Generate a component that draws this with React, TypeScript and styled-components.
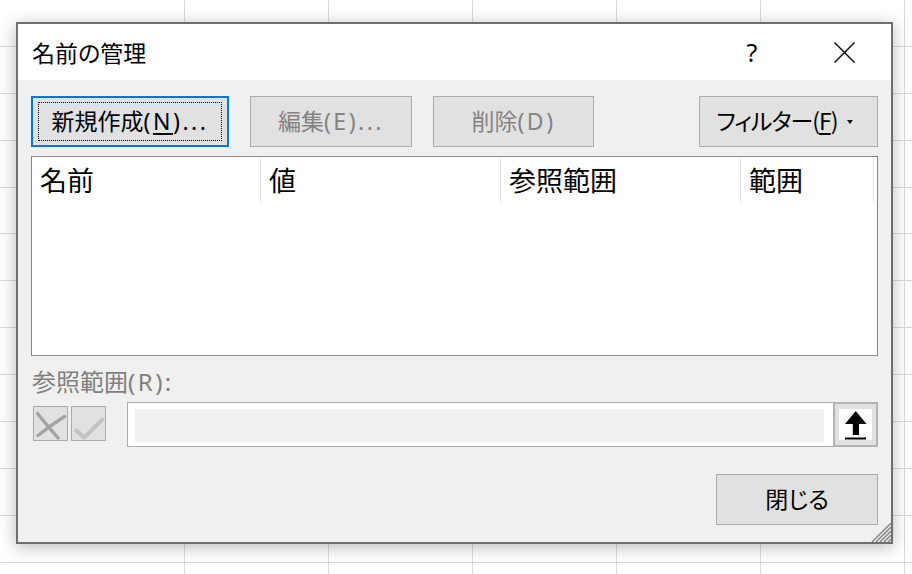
import React from "react";
import styled, { createGlobalStyle } from "styled-components";

const GlobalStyle = createGlobalStyle`
  html, body {
    margin: 0;
    padding: 0;
    overflow: hidden;
  }
  body {
    font-family: "Noto Sans CJK JP", "Noto Sans", sans-serif;
    font-feature-settings: "palt";
    color: #000;
  }
`;

const Page = styled.div`
  width: 912px;
  height: 574px;
  box-sizing: border-box;
  padding: 22px 0 0 16px;
  background-color: #fff;
  background-image:
    repeating-linear-gradient(to right, transparent 0 143px, #dadada 143px 144px),
    repeating-linear-gradient(to bottom, transparent 0 45.9px, #dadada 45.9px 46.9px);
  background-position: 41px 0, 0 0;
`;

const Dialog = styled.div`
  position: relative;
  width: 877px;
  height: 522px;
  box-sizing: border-box;
  border: 2px solid #6f6f6f;
  background: #f0f0f0;
  display: flex;
  flex-direction: column;
  box-shadow: 0 3px 16px rgba(0, 0, 0, 0.28);
`;

const TitleBar = styled.div`
  height: 56px;
  background: #fff;
  display: flex;
  align-items: center;
  padding: 0 24px 0 14px;
`;

const Title = styled.div`
  flex: 1;
  font-size: 23px;
  line-height: 1;
  padding-top: 1px;
`;

const CaptionButton = styled.div<{ $gap?: number }>`
  width: 46px;
  height: 40px;
  display: flex;
  align-items: center;
  justify-content: center;
  margin-left: ${(p) => p.$gap ?? 0}px;
  font-family: "Noto Sans", sans-serif;
  font-size: 25px;
  font-weight: 400;
  line-height: 1;
`;

const Body = styled.div`
  flex: 1;
  display: flex;
  flex-direction: column;
  padding: 16px 13px 17px 13px;
`;

const ButtonRow = styled.div`
  display: flex;
  height: 51px;
  gap: 21px;
`;

const Spacer = styled.div`
  flex: 1;
`;

const PushButton = styled.button<{
  $w: number;
  $focused?: boolean;
  $disabled?: boolean;
  $ls?: number;
  $pr?: number;
}>`
  position: relative;
  width: ${(p) => p.$w}px;
  height: 51px;
  box-sizing: border-box;
  background: #e1e1e1;
  border: ${(p) => (p.$focused ? "2px solid #0078d7" : "1px solid #adadad")};
  color: ${(p) => (p.$disabled ? "#838383" : "#000")};
  font-family: "Noto Sans CJK JP", "Noto Sans", sans-serif;
  font-feature-settings: "palt";
  font-size: 23px;
  letter-spacing: ${(p) => p.$ls ?? 0}px;
  line-height: 1;
  padding: 0 ${(p) => p.$pr ?? 0}px 2px 0;
  margin: 0;
  display: flex;
  align-items: center;
  justify-content: center;
  gap: 9px;
  &::after {
    content: "";
    display: ${(p) => (p.$focused ? "block" : "none")};
    position: absolute;
    inset: 4px 5px 4px 5px;
    border: 1px dotted #000;
  }
`;

const Latin = styled.span`
  font-family: "Noto Sans", sans-serif;
  letter-spacing: 2.5px;
`;

const Mnemonic = styled.span`
  text-decoration: underline;
  text-underline-offset: 3px;
  text-decoration-thickness: 1.5px;
`;

const DropCaret = styled.span`
  width: 0;
  height: 0;
  border-left: 3.5px solid transparent;
  border-right: 3.5px solid transparent;
  border-top: 4px solid #000;
  margin-top: 2px;
`;

const ListBox = styled.div`
  margin-top: 9px;
  height: 200px;
  box-sizing: border-box;
  border: 1px solid #828790;
  background: #fff;
  display: flex;
  flex-direction: column;
`;

const HeaderRow = styled.div`
  display: flex;
  height: 47px;
`;

const HeaderCell = styled.div<{ $w: number }>`
  width: ${(p) => p.$w}px;
  box-sizing: border-box;
  padding: 0 0 2px 8px;
  display: flex;
  align-items: center;
  font-size: 27px;
  line-height: 1;
  border-right: 1px solid #e5e5e5;
  margin: 1px 0 1px;
`;

const FieldLabel = styled.div`
  margin-top: 13px;
  height: 24px;
  line-height: 24px;
  font-size: 24px;
  color: #7f7f7f;
  padding-left: 1px;
`;

const RefRow = styled.div`
  margin-top: 9px;
  height: 45px;
  display: flex;
`;

const IconButton = styled.div<{ $ml: number }>`
  width: 35px;
  height: 35px;
  box-sizing: border-box;
  margin: 4px 0 0 ${(p) => p.$ml}px;
  border: 1px solid #ababab;
  background: #e1e1e1;
  display: flex;
`;

const InputArea = styled.div`
  flex: 1;
  margin-left: 21px;
  box-sizing: border-box;
  border: 1px solid #adadad;
  border-right: none;
  background: #fff;
  padding: 6px 9px 4px 7px;
  display: flex;
`;

const Field = styled.div`
  flex: 1;
  background: #f0f0f0;
`;

const RefButton = styled.div`
  width: 45px;
  box-sizing: border-box;
  border: 2px solid #b4b4b4;
  background: #e1e1e1;
  display: flex;
  align-items: center;
  justify-content: center;
`;

const RefIconBox = styled.div`
  width: 33px;
  height: 31px;
  background: #fff;
  display: flex;
  justify-content: center;
  padding-top: 2px;
  box-sizing: border-box;
`;

const FooterRow = styled.div`
  margin-top: 27px;
  display: flex;
  justify-content: flex-end;
`;

const Grip = styled.svg`
  position: absolute;
  right: 0;
  bottom: 0;
`;

export default function App() {
  return (
    <>
      <GlobalStyle />
      <Page>
        <Dialog>
          <TitleBar>
            <Title>名前の管理</Title>
            <CaptionButton>?</CaptionButton>
            <CaptionButton $gap={46}>
              <svg width="21" height="21" viewBox="0 0 21 21">
                <path d="M0.5 0.5 L20.5 20.5 M20.5 0.5 L0.5 20.5" stroke="#000" strokeWidth="1.4" />
              </svg>
            </CaptionButton>
          </TitleBar>
          <Body>
            <ButtonRow>
              <PushButton $w={198} $focused>
                <span>
                  新規作成
                  <Latin>
                    (<Mnemonic>N</Mnemonic>)...
                  </Latin>
                </span>
              </PushButton>
              <PushButton $w={162} $disabled>
                <span>
                  編集<Latin>(E)...</Latin>
                </span>
              </PushButton>
              <PushButton $w={161} $disabled>
                <span>
                  削除<Latin>(D)</Latin>
                </span>
              </PushButton>
              <Spacer />
              <PushButton $w={179} $ls={-1} $pr={8}>
                <span>
                  フィルター(<Mnemonic>F</Mnemonic>)
                </span>
                <DropCaret />
              </PushButton>
            </ButtonRow>
            <ListBox>
              <HeaderRow>
                <HeaderCell $w={229}>名前</HeaderCell>
                <HeaderCell $w={240}>値</HeaderCell>
                <HeaderCell $w={240}>参照範囲</HeaderCell>
                <HeaderCell $w={133}>範囲</HeaderCell>
              </HeaderRow>
            </ListBox>
            <FieldLabel>
              参照範囲<Latin>(R):</Latin>
            </FieldLabel>
            <RefRow>
              <IconButton $ml={2}>
                <svg width="33" height="33" viewBox="0 0 33 33">
                  <path
                    d="M3.5 6.5 Q12 17 24 31 M30.5 9.5 Q17 18 4 28.5"
                    stroke="#a3a3a3"
                    strokeWidth="3.4"
                    fill="none"
                    strokeLinecap="round"
                  />
                </svg>
              </IconButton>
              <IconButton $ml={3}>
                <svg width="33" height="33" viewBox="0 0 33 33">
                  <path
                    d="M3 22.5 L12 30.5 L31.5 11.5"
                    stroke="#c2c2c2"
                    strokeWidth="4"
                    fill="none"
                    strokeLinejoin="round"
                  />
                </svg>
              </IconButton>
              <InputArea>
                <Field />
              </InputArea>
              <RefButton>
                <RefIconBox>
                  <svg width="22" height="29" viewBox="0 0 22 29">
                    <polygon points="10.75,0 0,13 21.5,13" fill="#000" />
                    <rect x="7.8" y="12" width="6.2" height="12" fill="#000" />
                    <rect x="0" y="26.5" width="21" height="2" fill="#000" />
                  </svg>
                </RefIconBox>
              </RefButton>
            </RefRow>
            <FooterRow>
              <PushButton $w={162}>閉じる</PushButton>
            </FooterRow>
          </Body>
          <Grip width="20" height="20" viewBox="0 0 20 20">
            <path
              d="M20 1 L1 20 M20 5 L5 20 M20 9 L9 20 M20 13 L13 20 M20 17 L17 20"
              stroke="#8c8c8c"
              strokeWidth="1.6"
            />
          </Grip>
        </Dialog>
      </Page>
    </>
  );
}
